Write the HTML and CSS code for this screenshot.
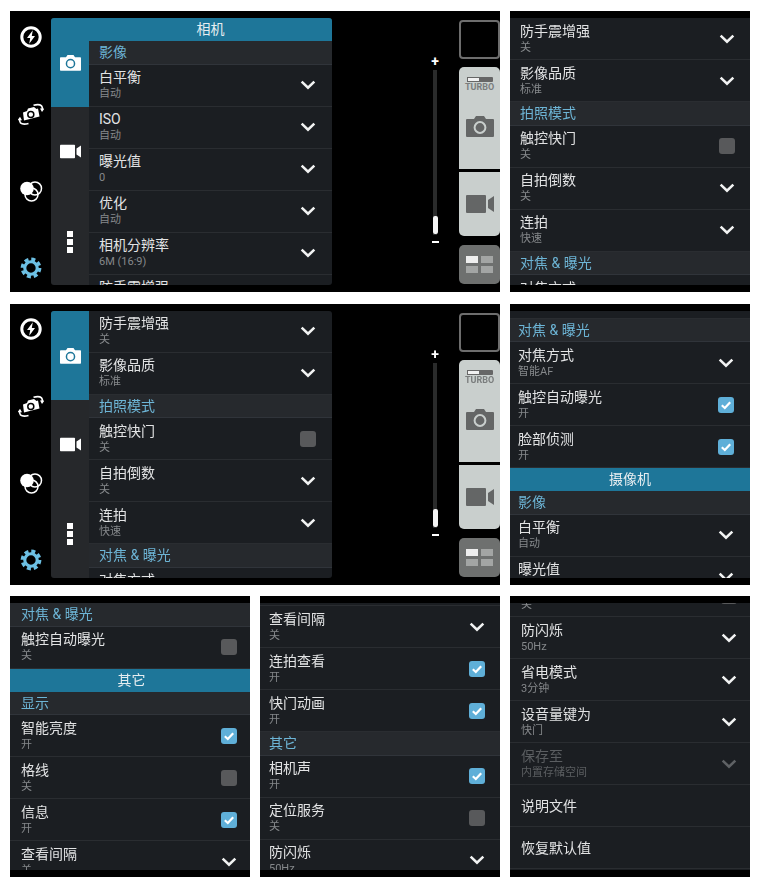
FILE: index.html
```html
<!DOCTYPE html>
<html lang="zh-CN">
<head>
    <meta charset="UTF-8">
    <title>相机设置</title>
    <link rel="stylesheet" href="styles.css">
</head>
<body>
    <svg class="icon-defs" aria-hidden="true">
        <symbol id="chevron" viewBox="0 0 14 9"><path d="M1.3 1.5 7 7l5.7-5.5" fill="none" stroke="currentColor" stroke-width="2.3"/></symbol>
        <symbol id="tick" viewBox="0 0 16 16"><path d="M3.8 8.3 6.8 11l5.4-5.8" fill="none" stroke="#fff" stroke-width="2.2"/></symbol>
        <symbol id="camera" viewBox="0 0 28 22"><path d="M1 4h7l2-3h8l2 3h7a1 1 0 0 1 1 1v16a1 1 0 0 1-1 1H1a1 1 0 0 1-1-1V5a1 1 0 0 1 1-1z" fill="currentColor"/><circle cx="14" cy="12.5" r="5.4" fill="none" stroke="var(--hole)" stroke-width="2"/></symbol>
        <symbol id="video" viewBox="0 0 28 18"><rect width="20" height="18" rx="1" fill="currentColor"/><path d="M28 1v16l-6-4V5z" fill="currentColor"/></symbol>
        <symbol id="flash" viewBox="0 0 26 26"><circle cx="13" cy="13" r="9.2" fill="none" stroke="#fff" stroke-width="3"/><path d="M14.8 6.2 9 14h3.2l-1 5.8L17 12h-3.2z" fill="#fff"/></symbol>
        <symbol id="switch" viewBox="0 0 26 26"><path d="M5 11.5 9 10l1-2.5 6-1.5 2.5 2 1.500-.4 1.500 8-15.500 4z" fill="#fff"/><circle cx="12.800" cy="13.500" r="3" fill="none" stroke="#000" stroke-width="1.500"/><path d="M15.500 4.200c3-.8 6.500-.8 8 .6 1 1 1 2.400.7 3.600M10.500 22.500c-3 .8-6.500.8-8-.6-1-1-1-2.400-.7-3.600" fill="none" stroke="#fff" stroke-width="1.700"/><path d="M22 7.500h4.500L24 11zM4 19.200H-.5L2 15.700z" fill="#fff"/></symbol>
        <symbol id="filters" viewBox="0 0 26 26"><circle cx="17" cy="10.500" r="6.500" fill="none" stroke="#fff" stroke-width="1.500"/><circle cx="13.500" cy="16.500" r="6.500" fill="none" stroke="#fff" stroke-width="1.500"/><circle cx="9" cy="10.500" r="6.800" fill="#fff"/></symbol>
        <symbol id="gear" viewBox="-3 -3 30 30"><circle cx="12" cy="12" r="9.800" fill="none" stroke="#6cc0e4" stroke-width="4.400" stroke-dasharray="4.500 3.200"/><circle cx="12" cy="12" r="7.200" fill="none" stroke="#6cc0e4" stroke-width="3.600"/></symbol>
    </svg>

    <main class="sheet">
        <section class="shot camera">
            <div class="rail">
                <svg class="rail-icon"><use href="#flash"/></svg>
                <svg class="rail-icon"><use href="#switch"/></svg>
                <svg class="rail-icon"><use href="#filters"/></svg>
                <svg class="rail-icon"><use href="#gear"/></svg>
            </div>
            <div class="drawer">
                <div class="tabs">
                    <div class="tab active"><svg class="tab-icon"><use href="#camera"/></svg></div>
                    <div class="tab"><svg class="tab-icon"><use href="#video"/></svg></div>
                    <div class="tab"><span class="dots"><i></i><i></i><i></i></span></div>
                </div>
                <div class="list">
                    <div class="head">相机</div>
                    <div class="section">影像</div>
                    <div class="row"><div class="label"><span class="title">白平衡</span><span class="value">自动</span></div><svg class="chevron"><use href="#chevron"/></svg></div>
                    <div class="row"><div class="label"><span class="title">ISO</span><span class="value">自动</span></div><svg class="chevron"><use href="#chevron"/></svg></div>
                    <div class="row"><div class="label"><span class="title">曝光值</span><span class="value">0</span></div><svg class="chevron"><use href="#chevron"/></svg></div>
                    <div class="row"><div class="label"><span class="title">优化</span><span class="value">自动</span></div><svg class="chevron"><use href="#chevron"/></svg></div>
                    <div class="row"><div class="label"><span class="title">相机分辨率</span><span class="value">6M (16:9)</span></div><svg class="chevron"><use href="#chevron"/></svg></div>
                    <div class="row"><div class="label"><span class="title">防手震增强</span><span class="value">关</span></div><svg class="chevron"><use href="#chevron"/></svg></div>
                </div>
            </div>
            <div class="zoom">
                <span class="zoom-sign">+</span>
                <div class="zoom-track"><span class="zoom-thumb"></span></div>
                <span class="zoom-sign minus"></span>
            </div>
            <div class="controls">
                <div class="preview"></div>
                <div class="capture">
                    <span class="turbo"><i></i></span>
                    <span class="turbo-text">TURBO</span>
                    <svg class="capture-icon"><use href="#camera"/></svg>
                </div>
                <div class="record"><svg class="record-icon"><use href="#video"/></svg></div>
                <div class="modes"><i class="lit"></i><i></i><i></i><i></i></div>
            </div>
        </section>

        <section class="shot side-a">
            <div class="list">
                <div class="row"><div class="label"><span class="title">防手震增强</span><span class="value">关</span></div><svg class="chevron"><use href="#chevron"/></svg></div>
                <div class="row"><div class="label"><span class="title">影像品质</span><span class="value">标准</span></div><svg class="chevron"><use href="#chevron"/></svg></div>
                <div class="section">拍照模式</div>
                <div class="row"><div class="label"><span class="title">触控快门</span><span class="value">关</span></div><span class="box"></span></div>
                <div class="row"><div class="label"><span class="title">自拍倒数</span><span class="value">关</span></div><svg class="chevron"><use href="#chevron"/></svg></div>
                <div class="row"><div class="label"><span class="title">连拍</span><span class="value">快速</span></div><svg class="chevron"><use href="#chevron"/></svg></div>
                <div class="section">对焦 &amp; 曝光</div>
                <div class="row"><div class="label"><span class="title">对焦方式</span><span class="value">智能AF</span></div><svg class="chevron"><use href="#chevron"/></svg></div>
            </div>
        </section>

        <section class="shot camera">
            <div class="rail">
                <svg class="rail-icon"><use href="#flash"/></svg>
                <svg class="rail-icon"><use href="#switch"/></svg>
                <svg class="rail-icon"><use href="#filters"/></svg>
                <svg class="rail-icon"><use href="#gear"/></svg>
            </div>
            <div class="drawer">
                <div class="tabs">
                    <div class="tab active"><svg class="tab-icon"><use href="#camera"/></svg></div>
                    <div class="tab"><svg class="tab-icon"><use href="#video"/></svg></div>
                    <div class="tab"><span class="dots"><i></i><i></i><i></i></span></div>
                </div>
                <div class="list">
                    <div class="row"><div class="label"><span class="title">防手震增强</span><span class="value">关</span></div><svg class="chevron"><use href="#chevron"/></svg></div>
                    <div class="row"><div class="label"><span class="title">影像品质</span><span class="value">标准</span></div><svg class="chevron"><use href="#chevron"/></svg></div>
                    <div class="section">拍照模式</div>
                    <div class="row"><div class="label"><span class="title">触控快门</span><span class="value">关</span></div><span class="box"></span></div>
                    <div class="row"><div class="label"><span class="title">自拍倒数</span><span class="value">关</span></div><svg class="chevron"><use href="#chevron"/></svg></div>
                    <div class="row"><div class="label"><span class="title">连拍</span><span class="value">快速</span></div><svg class="chevron"><use href="#chevron"/></svg></div>
                    <div class="section">对焦 &amp; 曝光</div>
                    <div class="row"><div class="label"><span class="title">对焦方式</span><span class="value">智能AF</span></div><svg class="chevron"><use href="#chevron"/></svg></div>
                </div>
            </div>
            <div class="zoom">
                <span class="zoom-sign">+</span>
                <div class="zoom-track"><span class="zoom-thumb"></span></div>
                <span class="zoom-sign minus"></span>
            </div>
            <div class="controls">
                <div class="preview"></div>
                <div class="capture">
                    <span class="turbo"><i></i></span>
                    <span class="turbo-text">TURBO</span>
                    <svg class="capture-icon"><use href="#camera"/></svg>
                </div>
                <div class="record"><svg class="record-icon"><use href="#video"/></svg></div>
                <div class="modes"><i class="lit"></i><i></i><i></i><i></i></div>
            </div>
        </section>

        <section class="shot side-b">
            <div class="list">
                <div class="stub tall"></div>
                <div class="section">对焦 &amp; 曝光</div>
                <div class="row"><div class="label"><span class="title">对焦方式</span><span class="value">智能AF</span></div><svg class="chevron"><use href="#chevron"/></svg></div>
                <div class="row"><div class="label"><span class="title">触控自动曝光</span><span class="value">开</span></div><span class="box on"><svg><use href="#tick"/></svg></span></div>
                <div class="row"><div class="label"><span class="title">脸部侦测</span><span class="value">开</span></div><span class="box on"><svg><use href="#tick"/></svg></span></div>
                <div class="head">摄像机</div>
                <div class="section">影像</div>
                <div class="row"><div class="label"><span class="title">白平衡</span><span class="value">自动</span></div><svg class="chevron"><use href="#chevron"/></svg></div>
                <div class="row"><div class="label"><span class="title">曝光值</span><span class="value">0</span></div><svg class="chevron"><use href="#chevron"/></svg></div>
            </div>
        </section>

        <section class="shot side-c">
            <div class="list">
                <div class="section">对焦 &amp; 曝光</div>
                <div class="row"><div class="label"><span class="title">触控自动曝光</span><span class="value">关</span></div><span class="box"></span></div>
                <div class="head">其它</div>
                <div class="section">显示</div>
                <div class="row"><div class="label"><span class="title">智能亮度</span><span class="value">开</span></div><span class="box on"><svg><use href="#tick"/></svg></span></div>
                <div class="row"><div class="label"><span class="title">格线</span><span class="value">关</span></div><span class="box"></span></div>
                <div class="row"><div class="label"><span class="title">信息</span><span class="value">开</span></div><span class="box on"><svg><use href="#tick"/></svg></span></div>
                <div class="row"><div class="label"><span class="title">查看间隔</span><span class="value">关</span></div><svg class="chevron"><use href="#chevron"/></svg></div>
            </div>
        </section>

        <section class="shot side-d">
            <div class="list">
                <div class="stub"></div>
                <div class="row"><div class="label"><span class="title">查看间隔</span><span class="value">关</span></div><svg class="chevron"><use href="#chevron"/></svg></div>
                <div class="row"><div class="label"><span class="title">连拍查看</span><span class="value">开</span></div><span class="box on"><svg><use href="#tick"/></svg></span></div>
                <div class="row"><div class="label"><span class="title">快门动画</span><span class="value">开</span></div><span class="box on"><svg><use href="#tick"/></svg></span></div>
                <div class="section">其它</div>
                <div class="row"><div class="label"><span class="title">相机声</span><span class="value">开</span></div><span class="box on"><svg><use href="#tick"/></svg></span></div>
                <div class="row"><div class="label"><span class="title">定位服务</span><span class="value">关</span></div><span class="box"></span></div>
                <div class="row"><div class="label"><span class="title">防闪烁</span><span class="value">50Hz</span></div><svg class="chevron"><use href="#chevron"/></svg></div>
            </div>
        </section>

        <section class="shot side-c">
            <div class="list">
                <div class="row pulled"><div class="label"><span class="title">定位服务</span><span class="value">关</span></div><span class="box"></span></div>
                <div class="row"><div class="label"><span class="title">防闪烁</span><span class="value">50Hz</span></div><svg class="chevron"><use href="#chevron"/></svg></div>
                <div class="row"><div class="label"><span class="title">省电模式</span><span class="value">3分钟</span></div><svg class="chevron"><use href="#chevron"/></svg></div>
                <div class="row"><div class="label"><span class="title">设音量键为</span><span class="value">快门</span></div><svg class="chevron"><use href="#chevron"/></svg></div>
                <div class="row disabled"><div class="label"><span class="title">保存至</span><span class="value">内置存储空间</span></div><svg class="chevron"><use href="#chevron"/></svg></div>
                <div class="row"><div class="label"><span class="title">说明文件</span></div></div>
                <div class="row"><div class="label"><span class="title">恢复默认值</span></div></div>
            </div>
        </section>
    </main>
</body>
</html>
```
FILE: styles.css
```css
* {
    margin: 0;
    padding: 0;
    box-sizing: border-box;
}

body {
    background: #fff;
    font-family: Roboto, "Noto Sans CJK SC", sans-serif;
    color: #e2e3e4;
}

.icon-defs {
    display: none;
}

.sheet {
    display: grid;
    grid-template-columns: repeat(3, 240px);
    grid-template-rows: repeat(3, 281px);
    gap: 11.5px 10px;
    padding: 11px 10px;
    filter: blur(0.35px); /* the source screenshots are soft */
}

/* each screenshot */
.shot {
    background: #000;
    padding: 7px 0;
    overflow: hidden;
    --inset: 10px;
    --end: 16px;
}

.side-a {
    --end: 15px;
}

.side-b {
    --inset: 8px;
    --end: 16px;
}

.side-c {
    --inset: 11px;
    --end: 13px;
}

.side-c .head {
    padding-left: 3px;
}

.side-d {
    --inset: 9px;
    --end: 15px;
}

/* settings list */
.list {
    height: 100%;
    overflow: hidden;
    background: #1b1e22;
    flex: 1;
    min-width: 0;
}

.head {
    height: 23px;
    background: #1e7699;
    color: #e6edf0;
    font-size: 14px;
    line-height: 22px;
    text-align: center;
}

.section {
    height: 23.5px;
    padding-left: var(--inset);
    background: #26292d;
    border-bottom: 1px solid #30343a;
    color: #6db5d6;
    font-size: 14px;
    line-height: 23px;
}

.row {
    display: flex;
    align-items: center;
    justify-content: space-between;
    height: 42px;
    padding: 0 var(--end) 0 var(--inset);
    border-bottom: 1px solid #2a2d31;
}

.pulled {
    margin-top: -28px;
}

.stub {
    height: 3px;
    border-bottom: 1px solid #2a2d31;
}

.stub.tall {
    height: 8px;
}

.title {
    display: block;
    font-size: 14px;
    line-height: 18px;
}

.value {
    display: block;
    color: #85888b;
    font-size: 11px;
    line-height: 16px;
}

.chevron {
    width: 16px;
    height: 10px;
    color: #f2f3f3;
}

.box {
    width: 16px;
    height: 16px;
    border-radius: 3px;
    background: #58595b;
}

.box.on {
    background: #5fafd8;
}

.box svg {
    display: block;
    width: 16px;
    height: 16px;
}

.disabled .title,
.disabled .value {
    color: #5b5e61;
}

.disabled .chevron {
    color: #5f6265;
}

/* camera screen */
.camera {
    grid-column: span 2;
    display: flex;
}

.rail {
    display: flex;
    flex-direction: column;
    align-items: center;
    gap: 51px;
    width: 41px;
    padding-top: 5.5px;
}

.rail-icon {
    width: 26px;
    height: 26px;
}

.drawer {
    display: flex;
    width: 281px;
    border-radius: 3px;
    overflow: hidden;
}

.tabs {
    display: flex;
    flex-direction: column;
    width: 38px;
    background: #26282b;
}

.tab {
    display: flex;
    align-items: center;
    justify-content: center;
    flex: 1;
    color: #fff;
}

.tab.active {
    background: #1e7699;
    --hole: #1e7699;
}

.tab-icon {
    width: 21px;
    height: 17px;
}

.dots {
    display: flex;
    flex-direction: column;
    gap: 2px;
    margin-top: 2px;
}

.dots i {
    width: 6px;
    height: 6px;
    background: #fff;
}

.zoom {
    display: flex;
    flex-direction: column;
    align-items: center;
    width: 10px;
    margin: -1px 19px 0 auto;
    padding-top: 39px;
}

.zoom-sign {
    height: 11px;
    margin-bottom: 3px;
    color: #fff;
    font-size: 14px;
    font-weight: 700;
    line-height: 11px;
}

.zoom-sign.minus {
    width: 7px;
    height: 2px;
    margin: 6px 0 0;
    background: #fff;
}

.zoom-track {
    display: flex;
    flex-direction: column;
    justify-content: flex-end;
    align-items: center;
    width: 4px;
    height: 165px;
    padding-bottom: 1px;
    background: #2a2b2b;
}

.zoom-thumb {
    flex: none;
    width: 5px;
    height: 18px;
    border-radius: 2px;
    background: #f4f4f4;
}

.controls {
    display: flex;
    flex-direction: column;
    width: 41px;
    margin-top: 2px;
    --hole: #c9cfcd;
}

.preview {
    height: 39px;
    border: 2px solid #6d6d6d;
    border-radius: 4px;
}

.capture {
    display: flex;
    flex-direction: column;
    align-items: center;
    height: 102px;
    margin-top: 8px;
    padding-top: 10px;
    background: #c9cfcd;
    border-radius: 5px 5px 0 0;
}

.turbo {
    display: block;
    width: 26px;
    height: 5px;
    border-radius: 1px;
    background: #666;
}

.turbo i {
    display: block;
    width: 13px;
    height: 5px;
    border: 1px solid #666;
    background: #f1f1f1;
}

.turbo-text {
    color: #7a7d7d;
    font-size: 9px;
    font-weight: 700;
    line-height: 11px;
}

.capture-icon {
    width: 28px;
    height: 22px;
    margin-top: 22px;
    color: #646666;
}

.record {
    display: flex;
    align-items: center;
    justify-content: center;
    height: 64px;
    margin-top: 3px;
    background: #c9cfcd;
    border-radius: 0 0 5px 5px;
}

.record-icon {
    width: 28px;
    height: 18px;
    color: #646666;
}

.modes {
    display: grid;
    grid-template-columns: 12px 12px;
    grid-auto-rows: 7px;
    gap: 3px;
    justify-content: center;
    align-content: center;
    height: 39px;
    margin-top: 9px;
    background: #6e706f;
    border-radius: 5px;
}

.modes i {
    background: #a3a5a4;
}

.modes .lit {
    background: #eeeeee;
}
```
